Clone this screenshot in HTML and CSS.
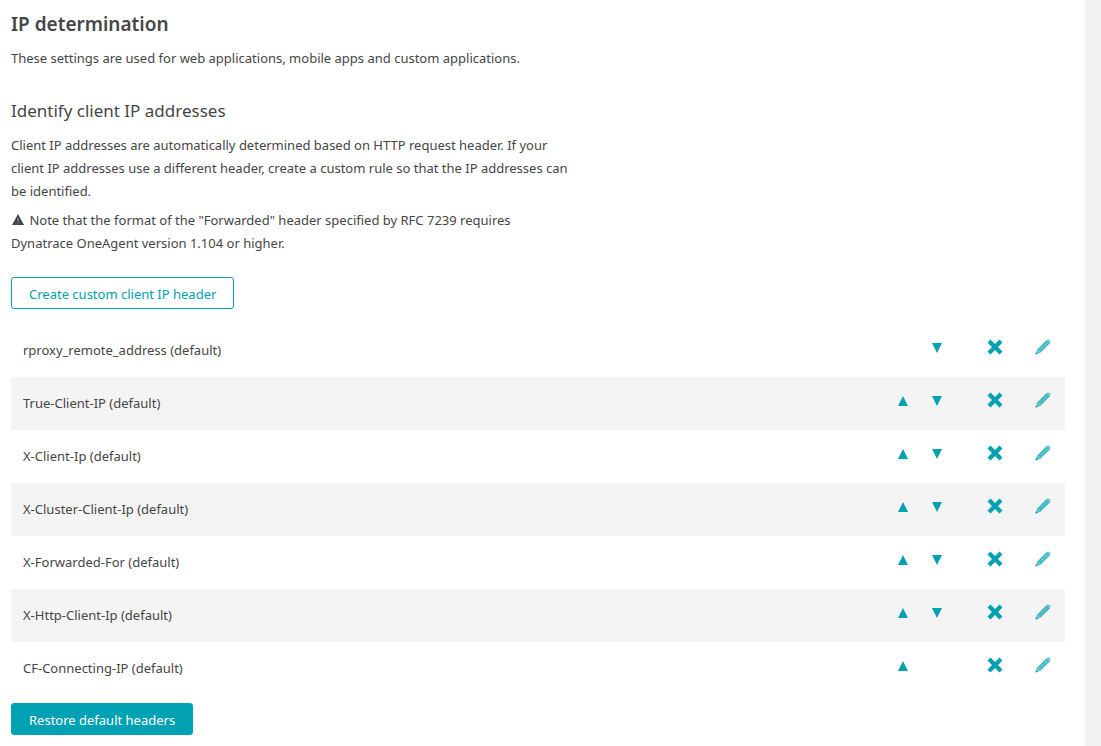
FILE: index.html
```
<!DOCTYPE html>
<html lang="en">
<head>
    <meta charset="UTF-8">
    <meta name="viewport" content="width=device-width, initial-scale=1.0">
    <title>IP determination</title>
    <link rel="stylesheet" href="styles.css">
</head>
<body>
    <svg class="sprite" aria-hidden="true">
        <symbol id="icon-up" viewBox="0 0 10 10"><path d="M5 0l5 10H0z"/></symbol>
        <symbol id="icon-down" viewBox="0 0 10 10"><path d="M0 0h10L5 10z"/></symbol>
        <symbol id="icon-delete" viewBox="0 0 16 16"><path d="M3.500.5L8 5 12.500.5l3 3L11 8l4.500 4.500-3 3L8 11l-4.500 4.500-3-3L5 8 .5 3.500z"/></symbol>
        <symbol id="icon-edit" viewBox="0 0 16 16">
            <path d="M.4 15.600l1.500-4.800L11.600 1.100C12.700.2 14 .2 14.900 1.100c.9.9.9 2.200-.2 3.300L5 14.100z" opacity=".55"/>
            <path d="M2.500 11.200L12 1.700M4.800 13.500L14.300 4" fill="none" stroke="currentColor" stroke-width=".8"/>
            <path d="M3.600 12.400L13.200 2.800" fill="none" stroke="currentColor" stroke-width="1" stroke-dasharray="1 1"/>
            <path d="M.4 15.600l.8-2.600 1.800 1.800z"/>
        </symbol>
    </svg>

    <main class="settings">
        <h1>IP determination</h1>
        <p>These settings are used for web applications, mobile apps and custom applications.</p>

        <h2>Identify client IP addresses</h2>
        <p class="description">Client IP addresses are automatically determined based on HTTP request header. If your client IP addresses use a different header, create a custom rule so that the IP addresses can be identified.</p>
        <p class="description note">
            <svg class="warning" viewBox="0 0 12 11" aria-hidden="true"><path d="M6 0l6 11H0z"/><path class="mark" d="M5.500 4h1v3.500h-1zM5.500 8.500h1v1h-1z"/></svg>
            Note that the format of the "Forwarded" header specified by RFC 7239 requires Dynatrace OneAgent version 1.104 or higher.
        </p>

        <button type="button" class="btn">Create custom client IP header</button>

        <table class="headers">
            <tbody>
                <tr>
                    <td>rproxy_remote_address (default)</td>
                    <td class="up"></td>
                    <td class="down"><button type="button" class="icon-btn" aria-label="Move down"><svg class="arrow"><use href="#icon-down"/></svg></button></td>
                    <td class="delete"><button type="button" class="icon-btn" aria-label="Delete"><svg><use href="#icon-delete"/></svg></button></td>
                    <td class="edit"><button type="button" class="icon-btn" aria-label="Edit"><svg><use href="#icon-edit"/></svg></button></td>
                </tr>
                <tr>
                    <td>True-Client-IP (default)</td>
                    <td class="up"><button type="button" class="icon-btn" aria-label="Move up"><svg class="arrow"><use href="#icon-up"/></svg></button></td>
                    <td class="down"><button type="button" class="icon-btn" aria-label="Move down"><svg class="arrow"><use href="#icon-down"/></svg></button></td>
                    <td class="delete"><button type="button" class="icon-btn" aria-label="Delete"><svg><use href="#icon-delete"/></svg></button></td>
                    <td class="edit"><button type="button" class="icon-btn" aria-label="Edit"><svg><use href="#icon-edit"/></svg></button></td>
                </tr>
                <tr>
                    <td>X-Client-Ip (default)</td>
                    <td class="up"><button type="button" class="icon-btn" aria-label="Move up"><svg class="arrow"><use href="#icon-up"/></svg></button></td>
                    <td class="down"><button type="button" class="icon-btn" aria-label="Move down"><svg class="arrow"><use href="#icon-down"/></svg></button></td>
                    <td class="delete"><button type="button" class="icon-btn" aria-label="Delete"><svg><use href="#icon-delete"/></svg></button></td>
                    <td class="edit"><button type="button" class="icon-btn" aria-label="Edit"><svg><use href="#icon-edit"/></svg></button></td>
                </tr>
                <tr>
                    <td>X-Cluster-Client-Ip (default)</td>
                    <td class="up"><button type="button" class="icon-btn" aria-label="Move up"><svg class="arrow"><use href="#icon-up"/></svg></button></td>
                    <td class="down"><button type="button" class="icon-btn" aria-label="Move down"><svg class="arrow"><use href="#icon-down"/></svg></button></td>
                    <td class="delete"><button type="button" class="icon-btn" aria-label="Delete"><svg><use href="#icon-delete"/></svg></button></td>
                    <td class="edit"><button type="button" class="icon-btn" aria-label="Edit"><svg><use href="#icon-edit"/></svg></button></td>
                </tr>
                <tr>
                    <td>X-Forwarded-For (default)</td>
                    <td class="up"><button type="button" class="icon-btn" aria-label="Move up"><svg class="arrow"><use href="#icon-up"/></svg></button></td>
                    <td class="down"><button type="button" class="icon-btn" aria-label="Move down"><svg class="arrow"><use href="#icon-down"/></svg></button></td>
                    <td class="delete"><button type="button" class="icon-btn" aria-label="Delete"><svg><use href="#icon-delete"/></svg></button></td>
                    <td class="edit"><button type="button" class="icon-btn" aria-label="Edit"><svg><use href="#icon-edit"/></svg></button></td>
                </tr>
                <tr>
                    <td>X-Http-Client-Ip (default)</td>
                    <td class="up"><button type="button" class="icon-btn" aria-label="Move up"><svg class="arrow"><use href="#icon-up"/></svg></button></td>
                    <td class="down"><button type="button" class="icon-btn" aria-label="Move down"><svg class="arrow"><use href="#icon-down"/></svg></button></td>
                    <td class="delete"><button type="button" class="icon-btn" aria-label="Delete"><svg><use href="#icon-delete"/></svg></button></td>
                    <td class="edit"><button type="button" class="icon-btn" aria-label="Edit"><svg><use href="#icon-edit"/></svg></button></td>
                </tr>
                <tr>
                    <td>CF-Connecting-IP (default)</td>
                    <td class="up"><button type="button" class="icon-btn" aria-label="Move up"><svg class="arrow"><use href="#icon-up"/></svg></button></td>
                    <td class="down"></td>
                    <td class="delete"><button type="button" class="icon-btn" aria-label="Delete"><svg><use href="#icon-delete"/></svg></button></td>
                    <td class="edit"><button type="button" class="icon-btn" aria-label="Edit"><svg><use href="#icon-edit"/></svg></button></td>
                </tr>
            </tbody>
        </table>

        <button type="button" class="btn btn-primary">Restore default headers</button>
    </main>
</body>
</html>
```
FILE: styles.css
```
* {
    box-sizing: border-box;
}

body {
    margin: 0;
    padding-right: 16px;
    font-family: "Noto Sans", sans-serif;
    font-size: 13px;
    line-height: 23px;
    background: #f2f2f2;
    color: #454646;
}

.sprite {
    display: none;
}

.settings {
    min-height: 100vh;
    padding: 9px 20px 11px 11px;
    background: #fff;
}

h1 {
    margin: 0 0 8px;
    font-size: 19px;
    line-height: 30px;
    font-weight: 600;
}

h2 {
    margin: 26px 0 8px;
    font-size: 17px;
    line-height: 30px;
    font-weight: normal;
}

p {
    margin: 0;
}

.description {
    max-width: 571px;
}

.note {
    max-width: 540px;
    margin: 6px 0 22px;
}

.warning {
    width: 12px;
    height: 11px;
    margin: 0 2px 0 1px;
    fill: #454646;
}

.warning .mark {
    fill: #999;
}

.btn {
    display: block;
    height: 32px;
    padding: 2px 17px 0;
    border: 1px solid #00a1b2;
    border-radius: 3px;
    background: #fff;
    color: #00a1b2;
    font: inherit;
    cursor: pointer;
}

.btn-primary {
    background: #00a1b2;
    color: #fff;
}

.headers {
    width: 100%;
    margin: 15px 0 8px;
    border-collapse: collapse;
}

.headers td {
    height: 53px;
    padding: 0 0 0 12px;
}

.headers tr:nth-child(even) {
    background: #f4f4f4;
}

.headers .up,
.headers .down,
.headers .delete,
.headers .edit {
    padding: 0 0 6px;
    text-align: center;
}

.headers .up {
    width: 34px;
}

.headers .down {
    width: 49px;
    padding-right: 15px;
}

.headers .delete {
    width: 52px;
    padding-bottom: 8px;
}

.headers .edit {
    width: 44px;
    padding-bottom: 8px;
}

.icon-btn {
    display: inline-flex;
    align-items: center;
    justify-content: center;
    width: 24px;
    height: 24px;
    padding: 0;
    border: 0;
    background: none;
    color: #00a1b2;
    vertical-align: middle;
    cursor: pointer;
}

.icon-btn svg {
    width: 16px;
    height: 16px;
    fill: currentColor;
}

.icon-btn .arrow {
    width: 10px;
    height: 10px;
}
```
